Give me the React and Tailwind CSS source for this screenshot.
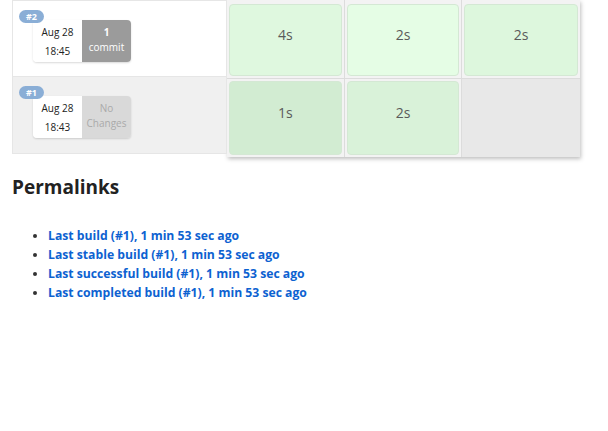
const builds = [
  { id: 2, date: 'Aug 28', time: '18:45', changes: ['1', 'commit'], hasCommits: true, cells: [{ t: '4s', bg: 'bg-[#dff8df]' }, { t: '2s', bg: 'bg-[#e5fde5]' }, { t: '2s', bg: 'bg-[#ddf7dd]' }] },
  { id: 1, date: 'Aug 28', time: '18:43', changes: ['No', 'Changes'], hasCommits: false, cells: [{ t: '1s', bg: 'bg-[#d2ecd2]' }, { t: '2s', bg: 'bg-[#d9f2d9]' }, null] },
];

const permalinks = [
  'Last build (#1), 1 min 53 sec ago',
  'Last stable build (#1), 1 min 53 sec ago',
  'Last successful build (#1), 1 min 53 sec ago',
  'Last completed build (#1), 1 min 53 sec ago',
];

function BuildRow({ build, first }) {
  return (
    <div
      className={`relative h-[77px] border-x border-[#e6e6e6] ${first ? 'bg-white border-y' : 'bg-[#f0f0f0] border-b'}`}
    >
      <span className="absolute left-[6px] top-[9px] z-10 h-[13px] w-[25px] rounded-full bg-[#8aaed6] text-center text-[9px] font-bold leading-[13px] text-white">
        #{build.id}
      </span>
      <div className="absolute left-[20px] top-[19px] flex h-[42px] rounded-[4px] shadow-[0_1px_2px_rgba(0,0,0,0.15)]">
        <div className="flex w-[49px] flex-col items-center justify-center gap-[9px] rounded-l-[4px] bg-white text-[10px] leading-none text-[#222]">
          <span>{build.date}</span>
          <span>{build.time}</span>
        </div>
        <div
          className={`flex w-[49px] flex-col items-center justify-center gap-[5px] rounded-r-[4px] pb-[3px] text-[10px] leading-none ${build.hasCommits ? 'bg-[#9b9b9b] text-white' : 'bg-[#d9d9d9] text-[#aaa]'}`}
        >
          <span className={build.hasCommits ? 'font-bold' : ''}>{build.changes[0]}</span>
          <span>{build.changes[1]}</span>
        </div>
      </div>
    </div>
  );
}

export default function App() {
  return (
    <div className="h-[431px] w-[608px] bg-white font-['Open_Sans',sans-serif]">
      <div className="flex pl-3">
        <div className="w-[215px]">
          {builds.map((b, i) => (
            <BuildRow key={b.id} build={b} first={i === 0} />
          ))}
        </div>
        <div className="grid h-[157px] w-[353px] grid-cols-3 grid-rows-2 bg-[#ececec] shadow-[1px_2px_4px_rgba(0,0,0,0.25)]">
          {builds.map((b, r) =>
            b.cells.map((c, i) => (
              <div
                key={`${r}-${i}`}
                className={`p-[2px] ${r === 0 ? 'pt-[4px]' : 'pt-[2px]'} ${i < 2 ? 'border-r border-[#dcdcdc]' : ''} ${r === 0 ? 'border-b border-[#dcdcdc]' : ''} bg-[#f3f3f3]`}
              >
                {c ? (
                  <div className={`flex h-full items-center justify-center rounded-[4px] border border-[#d4e8d4] pb-[10px] text-[14px] text-[#5a5a5a] ${c.bg}`}>
                    {c.t}
                  </div>
                ) : (
                  <div className="-m-[2px] h-[calc(100%+4px)] bg-[#e8e8e8]" />
                )}
              </div>
            ))
          )}
        </div>
      </div>

      <h2 className="mt-[16px] pl-3 text-[19px] font-bold leading-[28px] text-[#222]">Permalinks</h2>
      <ul className="mt-[25px] list-disc pl-[48px] text-[12.2px] font-bold leading-[19px] text-[#0d62d1] marker:text-[#333]">
        {permalinks.map((p) => (
          <li key={p}>
            <a href="#" className="text-[#0d62d1]">{p}</a>
          </li>
        ))}
      </ul>
    </div>
  );
}
